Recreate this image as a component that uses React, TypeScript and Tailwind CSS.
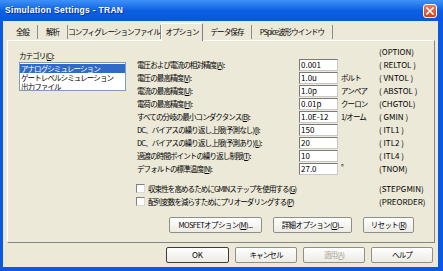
import React from 'react';

const K = ({ c }: { c: string }) => <span className="underline">{c}</span>;

type Row = { label: string; k: string; value: string; unit: string; param: string };

const rows: Row[] = [
  { label: '電圧および電流の相対精度', k: 'A', value: '0.001', unit: '', param: '( RELTOL )' },
  { label: '電圧の最高精度', k: 'V', value: '1.0u', unit: 'ボルト', param: '( VNTOL )' },
  { label: '電流の最高精度', k: 'U', value: '1.0p', unit: 'アンペア', param: '( ABSTOL )' },
  { label: '電荷の最高精度', k: 'H', value: '0.01p', unit: 'クーロン', param: '(CHGTOL)' },
  { label: 'すべての分岐の最小コンダクタンス', k: 'B', value: '1.0E-12', unit: '1/オーム', param: '( GMIN )' },
  { label: 'DC、バイアスの繰り返し上限(予測なし)', k: 'I', value: '150', unit: '', param: '( ITL1 )' },
  { label: 'DC、バイアスの繰り返し上限(予測あり)', k: 'L', value: '20', unit: '', param: '( ITL2 )' },
  { label: '過渡の時間ポイントの繰り返し制限', k: 'T', value: '10', unit: '', param: '( ITL4 )' },
  { label: 'デフォルトの標準温度', k: 'N', value: '27.0', unit: '°', param: '(TNOM)' },
];

function Button({
  children,
  className = '',
  def = false,
  disabled = false,
}: {
  children: React.ReactNode;
  className?: string;
  def?: boolean;
  disabled?: boolean;
}) {
  return (
    <div
      className={
        'h-[16px] flex items-center justify-center whitespace-nowrap rounded-[2px] border bg-linear-to-b from-[#ffffff] to-[#ecebe4] ' +
        (def ? 'border-[#3c3c3c] ' : 'border-[#8f8f8a] ') +
        (disabled ? 'text-[#aca899] ' : 'text-black ') +
        className
      }
    >
      {children}
    </div>
  );
}

function Tab({ label, w, selected = false }: { label: string; w: string; selected?: boolean }) {
  if (selected) {
    return (
      <div
        className={
          'h-[18px] flex items-center justify-center whitespace-nowrap bg-[#ece9d8] border-l border-t border-white border-r border-r-[#808080] -mb-px relative z-10 ' +
          w
        }
      >
        <span className="-mt-[2px]">{label}</span>
      </div>
    );
  }
  return (
    <div className={'h-[14px] flex items-center justify-center whitespace-nowrap border-r border-[#8d8d8d] mb-[1px] ' + w}>
      <span>{label}</span>
    </div>
  );
}

const LAT = 'text-[8px] tracking-normal';

export default function App() {
  return (
    <div className="w-[443px] h-[271px] flex flex-col bg-[#0b59e0] overflow-hidden font-['Noto_Sans_CJK_JP',sans-serif] text-[7.5px] tracking-[-0.9px] leading-none text-black">
      {/* Title bar */}
      <div className="h-[21px] shrink-0 flex items-center bg-linear-to-b from-[#3f92f8] via-[#0d60e3] to-[#0856dc]">
        <span className="ml-[5px] font-['Liberation_Sans',sans-serif] font-bold text-[8.5px] text-white tracking-[0.3px] [text-shadow:1px_1px_0_#0b2f9a]">
          Simulation Settings - TRAN
        </span>
        <div className="ml-auto mr-[6px] w-[14px] h-[14px] rounded-[3px] border border-white bg-linear-to-b from-[#ea7b5c] to-[#d3401c] flex items-center justify-center">
          <svg width="8" height="8" viewBox="0 0 8 8">
            <path d="M1 1 L7 7 M7 1 L1 7" stroke="white" strokeWidth="1.6" strokeLinecap="square" />
          </svg>
        </div>
      </div>

      {/* Body */}
      <div className="flex-1 flex flex-col bg-[#ece9d8] ml-[3px] mr-[5px] mb-[4px]">
        {/* Tabs */}
        <div className="h-[19px] flex items-end pl-[5px]">
          <Tab label="全般" w="w-[30px]" />
          <Tab label="解析" w="w-[30px]" />
          <Tab label="コンフィグレーションファイル" w="w-[93px]" />
          <Tab label="オプション" w="w-[42px]" selected />
          <Tab label="データ保存" w="w-[49px]" />
          <Tab label="PSpice波形ウインドウ" w="w-[81px]" />
        </div>

        {/* Panel */}
        <div className="h-[203px] ml-[4px] mr-[3px] border-l border-t border-white border-r border-b border-r-[#858585] border-b-[#858585] flex">
          {/* Left column */}
          <div className="w-[129px] shrink-0 pl-[11px] pt-[10px] flex flex-col">
            <div className="h-[10px] flex items-center whitespace-nowrap">
              カテゴリ(<K c="C" />):
            </div>
            <div className="mt-[1px] w-[107px] h-[29px] bg-white border border-[#7f9db9] flex flex-col pt-[1px] overflow-hidden whitespace-nowrap">
              <div className="h-[9px] shrink-0 flex items-center bg-[#316ac5] text-white pl-[1px]">アナログシミュレーション</div>
              <div className="h-[9px] shrink-0 flex items-center pl-[1px]">ゲートレベルシミュレーション</div>
              <div className="h-[9px] shrink-0 flex items-center pl-[1px]">出力ファイル</div>
            </div>
          </div>

          {/* Right column */}
          <div className="flex-1 flex flex-col pt-[4px] whitespace-nowrap">
            <div className={'h-[13px] flex items-center pl-[242px] ' + LAT}>(OPTION)</div>
            {rows.map((r) => (
              <div key={r.k} className="h-[13px] flex items-center">
                <div className="w-[162px] shrink-0">
                  {r.label}(<K c={r.k} />):
                </div>
                <div className={'w-[39px] h-[12px] shrink-0 bg-white border border-t-[#7a7a7a] border-l-[#7a7a7a] border-r-[#c8c8c8] border-b-[#c8c8c8] flex items-center pl-[1px] ' + LAT}>
                  {r.value}
                </div>
                <div className={'w-[41px] shrink-0 pl-[3px] ' + (r.unit === '°' ? 'self-start pt-[1px]' : '')}>
                  {r.unit}
                </div>
                <div className={'whitespace-pre ' + LAT}>{r.param}</div>
              </div>
            ))}

            <div className="mt-[7px] h-[13px] flex items-center">
              <div className="w-[242px] shrink-0 flex items-center">
                <div className="w-[9px] h-[9px] -ml-[1px] mr-[3px] bg-white border border-t-[#808080] border-l-[#808080] border-r-[#d8d8d8] border-b-[#d8d8d8]" />
                <span>
                  収束性を高めるためにGMINステップを使用する(<K c="G" />)
                </span>
              </div>
              <div className={LAT}>(STEPGMIN)</div>
            </div>
            <div className="h-[13px] flex items-center">
              <div className="w-[242px] shrink-0 flex items-center">
                <div className="w-[9px] h-[9px] -ml-[1px] mr-[3px] bg-white border border-t-[#808080] border-l-[#808080] border-r-[#d8d8d8] border-b-[#d8d8d8]" />
                <span>
                  配列変数を減らすためにプリオーダリングする(<K c="P" />)
                </span>
              </div>
              <div className={LAT}>(PREORDER)</div>
            </div>

            <div className="mt-[9px] flex pl-[32px] gap-[11px] tracking-[-0.6px]">
              <Button className="w-[93px]">
                MOSFETオプション(<K c="M" />)...
              </Button>
              <Button className="w-[79px]">
                詳細オプション(<K c="O" />)...
              </Button>
              <Button className="w-[51px]">
                リセット(<K c="R" />)
              </Button>
            </div>
          </div>
        </div>

        {/* Bottom buttons */}
        <div className="mt-[4px] flex justify-end gap-[6px] mr-[5px]">
          <Button className={'w-[63px] ' + LAT} def>
            OK
          </Button>
          <Button className="w-[62px]">キャンセル</Button>
          <Button className="w-[62px]" disabled>
            適用(<K c="A" />)
          </Button>
          <Button className="w-[62px]">ヘルプ</Button>
        </div>
      </div>
    </div>
  );
}
